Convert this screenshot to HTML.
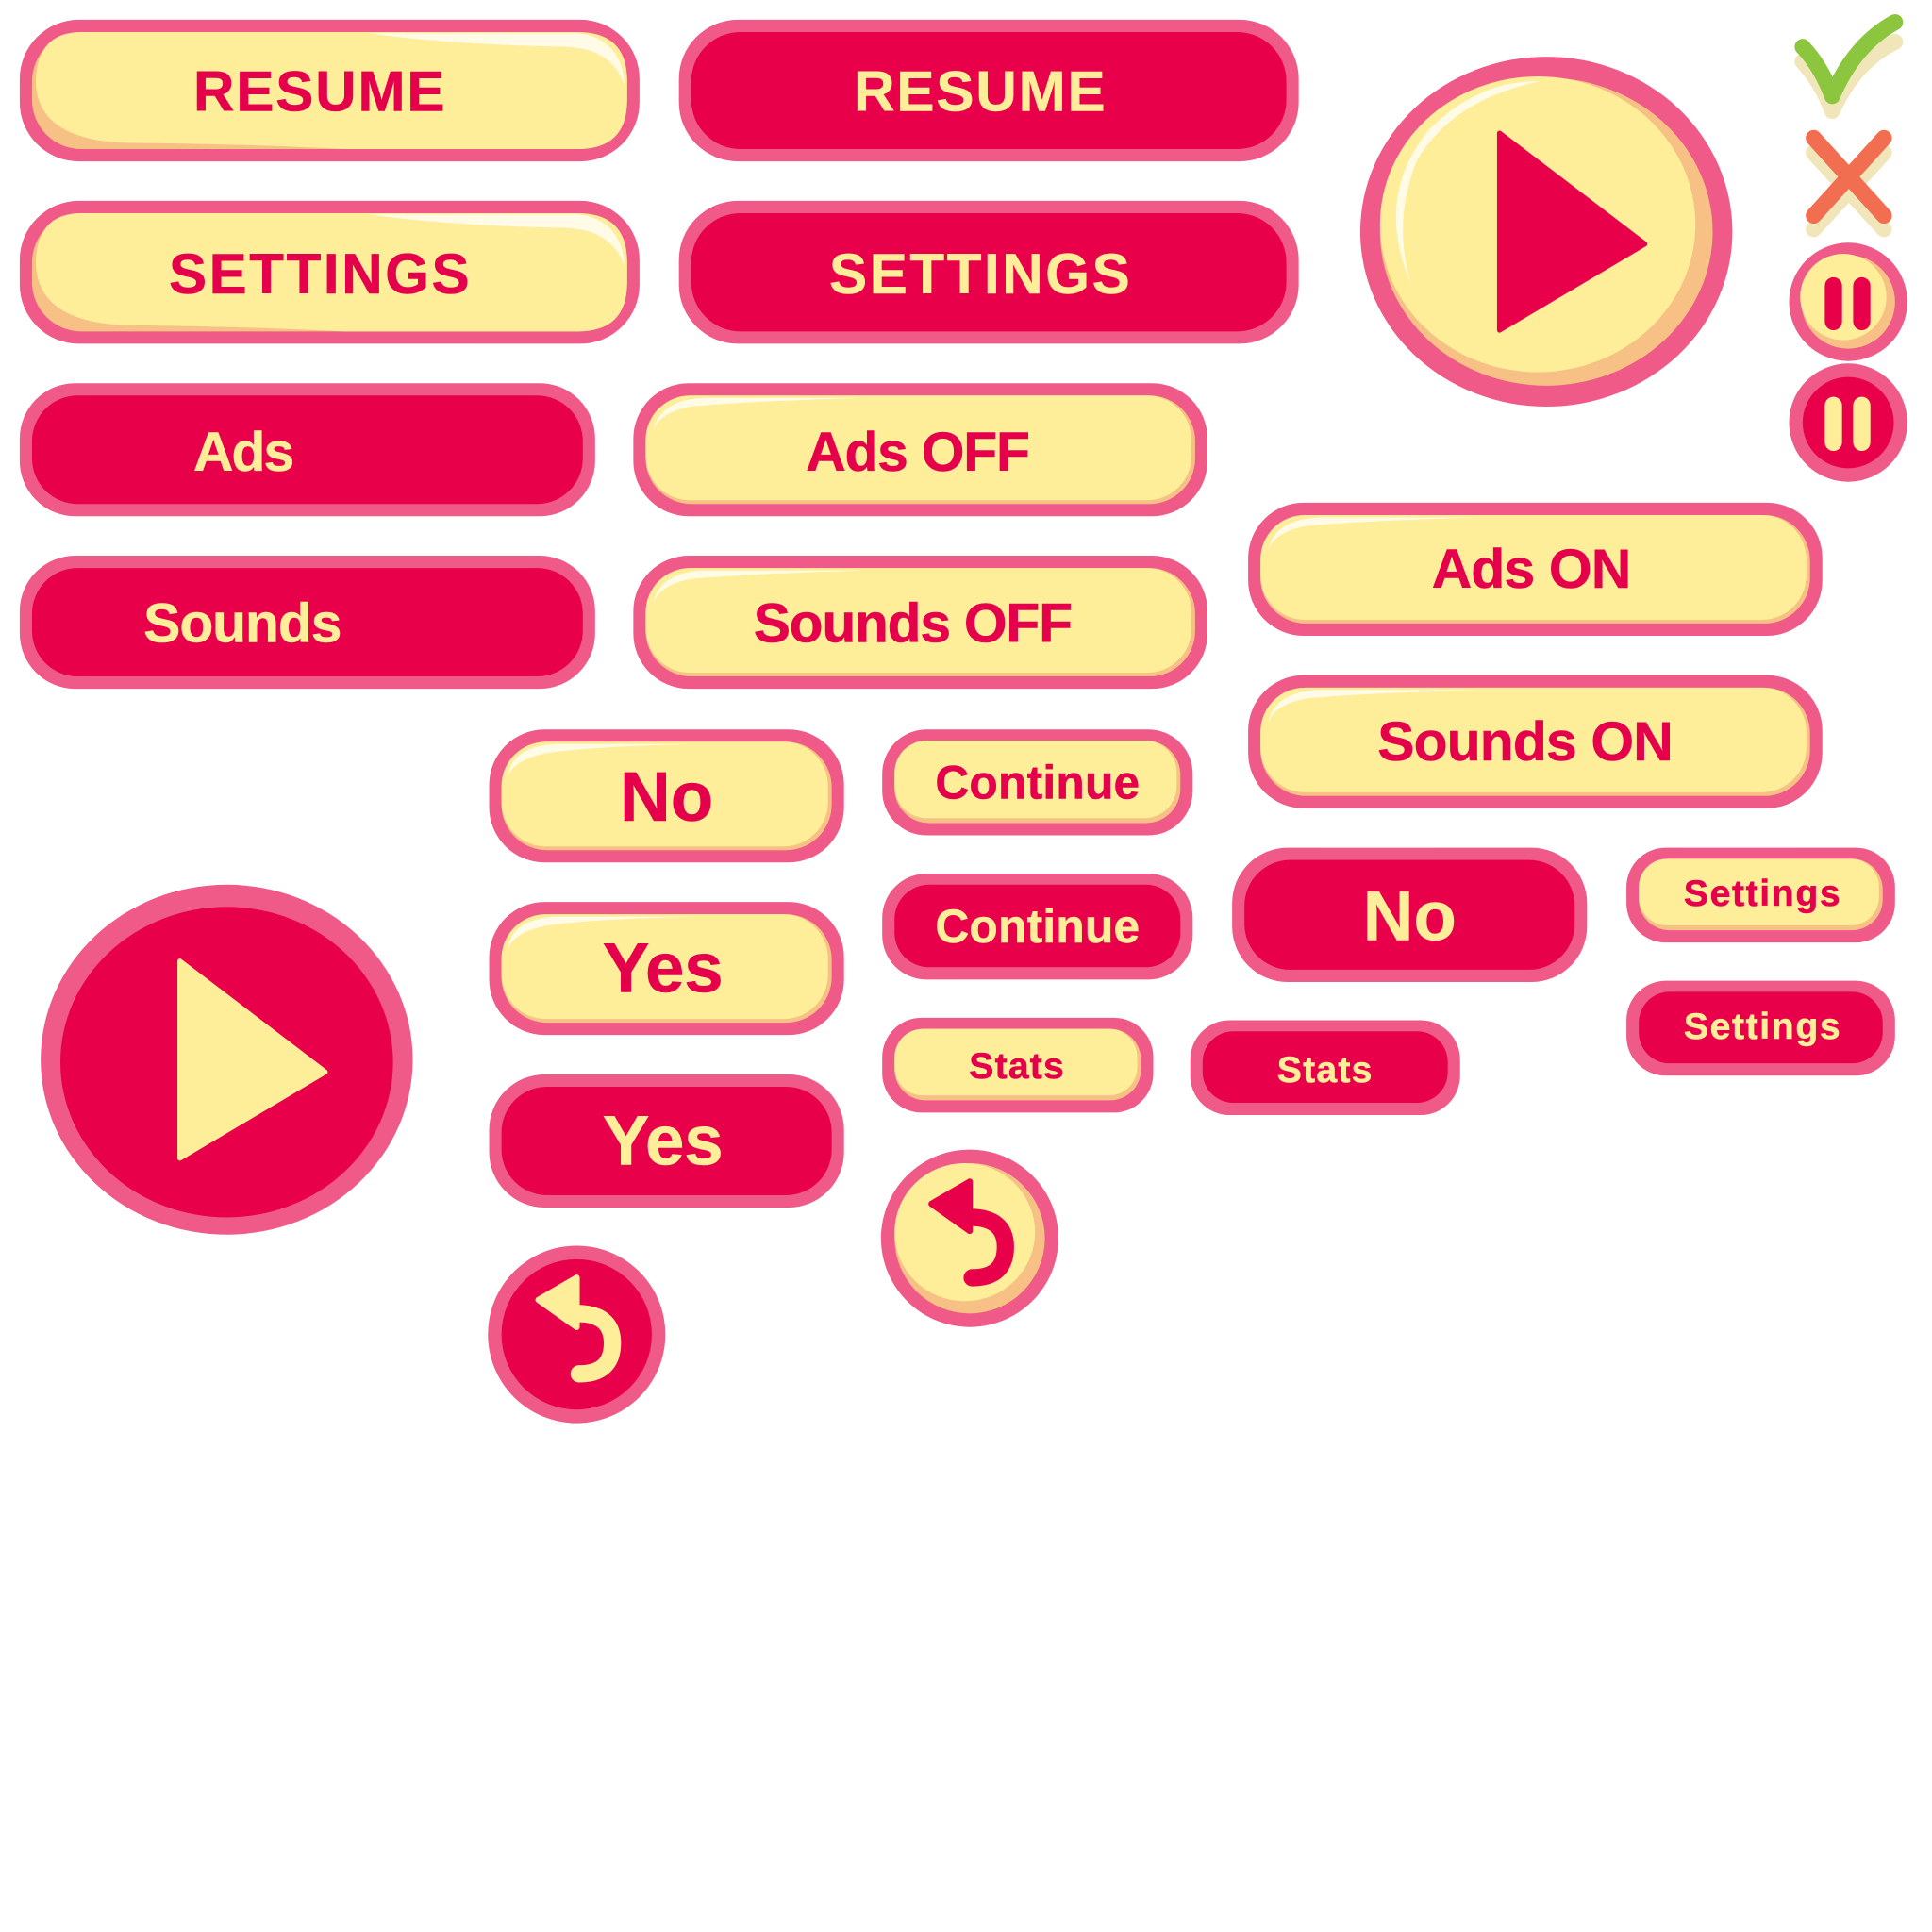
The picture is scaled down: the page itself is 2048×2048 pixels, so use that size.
<!DOCTYPE html>
<html><head><meta charset="utf-8"><style>
html,body{margin:0;padding:0;background:#fff;}
svg{display:block;}
text{font-family:"Liberation Sans",Arial,sans-serif;font-weight:bold;text-anchor:middle;}
.ty{fill:#e5004b;stroke:#e5004b;stroke-width:0.4;}
.tr{fill:#feee9a;stroke:#feee9a;stroke-width:0.4;}
</style></head><body>
<svg width="2048" height="2048" viewBox="0 0 1568 1568" xmlns="http://www.w3.org/2000/svg">

<!-- RESUME yellow -->
<rect x="16" y="16" width="503" height="115" rx="48" fill="#f05a88"/>
<rect x="26" y="26" width="483" height="95" rx="40" fill="#f7c185"/>
<path d="M66 26 L469 26 Q509 26 509 66 L509 81 Q509 121 469 121 L280 121 Q200 117 110 116 Q30 116 29 66 Q30 26 66 26Z" fill="#feee9a"/>
<path d="M300 27 L470 27 Q505 32 507 70 Q498 40 460 38 Q360 36 300 27Z" fill="#fffbe6"/>
<text class="ty" x="259" y="90" font-size="46" textLength="204">RESUME</text>
<!-- RESUME red -->
<rect x="551" y="16" width="503" height="115" rx="48" fill="#f05a88"/>
<rect x="561" y="26" width="483" height="95" rx="40" fill="#e8004a"/>
<text class="tr" x="795" y="90" font-size="46" textLength="204">RESUME</text>

<!-- SETTINGS yellow -->
<rect x="16" y="163" width="503" height="116" rx="48" fill="#f05a88"/>
<rect x="26" y="173" width="483" height="96" rx="40" fill="#f7c185"/>
<path d="M66 173 L469 173 Q509 173 509 213 L509 229 Q509 269 469 269 L280 269 Q200 265 110 264 Q30 264 29 213 Q30 173 66 173Z" fill="#feee9a"/>
<path d="M300 174 L470 174 Q505 179 507 217 Q498 187 460 185 Q360 183 300 174Z" fill="#fffbe6"/>
<text class="ty" x="259" y="238" font-size="46" textLength="244">SETTINGS</text>
<!-- SETTINGS red -->
<rect x="551" y="163" width="503" height="116" rx="48" fill="#f05a88"/>
<rect x="561" y="173" width="483" height="96" rx="40" fill="#e8004a"/>
<text class="tr" x="795" y="238" font-size="46" textLength="244">SETTINGS</text>

<!-- Ads red -->
<rect x="16" y="311" width="467" height="108" rx="45" fill="#f05a88"/>
<rect x="26" y="321" width="447" height="88" rx="37" fill="#e8004a"/>
<text class="tr" x="198" y="382" font-size="45" textLength="82">Ads</text>
<!-- Ads OFF yellow -->
<rect x="514" y="311" width="466" height="108" rx="45" fill="#f05a88"/>
<rect x="524" y="321" width="446" height="88" rx="37" fill="#f7c185"/>
<rect x="524" y="321" width="443" height="85" rx="36" fill="#feee9a"/>
<path d="M530 350 Q535 325 570 323 L700 323 Q600 326 560 330 Q535 335 530 350Z" fill="#fffbe6"/>
<text class="ty" x="745" y="382" font-size="45" textLength="182">Ads OFF</text>

<!-- Sounds red -->
<rect x="16" y="451" width="467" height="108" rx="45" fill="#f05a88"/>
<rect x="26" y="461" width="447" height="88" rx="37" fill="#e8004a"/>
<text class="tr" x="197" y="521" font-size="45" textLength="161">Sounds</text>
<!-- Sounds OFF yellow -->
<rect x="514" y="451" width="466" height="108" rx="45" fill="#f05a88"/>
<rect x="524" y="461" width="446" height="88" rx="37" fill="#f7c185"/>
<rect x="524" y="461" width="443" height="85" rx="36" fill="#feee9a"/>
<path d="M530 490 Q535 465 570 463 L700 463 Q600 466 560 470 Q535 475 530 490Z" fill="#fffbe6"/>
<text class="ty" x="741" y="521" font-size="45" textLength="259">Sounds OFF</text>

<!-- Ads ON yellow -->
<rect x="1013" y="408" width="466" height="108" rx="45" fill="#f05a88"/>
<rect x="1023" y="418" width="446" height="88" rx="37" fill="#f7c185"/>
<rect x="1023" y="418" width="443" height="85" rx="36" fill="#feee9a"/>
<path d="M1029 447 Q1034 422 1069 420 L1199 420 Q1099 423 1059 427 Q1034 432 1029 447Z" fill="#fffbe6"/>
<text class="ty" x="1243" y="477" font-size="45" textLength="162">Ads ON</text>
<!-- Sounds ON yellow -->
<rect x="1013" y="548" width="466" height="108" rx="45" fill="#f05a88"/>
<rect x="1023" y="558" width="446" height="88" rx="37" fill="#f7c185"/>
<rect x="1023" y="558" width="443" height="85" rx="36" fill="#feee9a"/>
<path d="M1029 587 Q1034 562 1069 560 L1199 560 Q1099 563 1059 567 Q1034 572 1029 587Z" fill="#fffbe6"/>
<text class="ty" x="1238" y="617" font-size="45" textLength="240">Sounds ON</text>

<!-- Big play yellow -->
<ellipse cx="1255" cy="188" rx="151" ry="142" fill="#f05a88"/>
<ellipse cx="1255" cy="188" rx="135" ry="125" fill="#f7c185"/>
<ellipse cx="1248" cy="182" rx="128" ry="120" fill="#feee9a"/>
<path d="M1145 230 Q1115 160 1160 105 Q1200 65 1250 66 Q1180 80 1150 130 Q1130 180 1145 230Z" fill="#fffbe6"/>
<path d="M1217 108 L1335 198 L1217 268 Z" fill="#e8004a" stroke="#e8004a" stroke-width="4" stroke-linejoin="round"/>

<!-- Check -->
<path d="M1463 50 Q1478 66 1487 90 Q1505 50 1538 34" fill="none" stroke="#f1e6b9" stroke-width="13" stroke-linecap="round" stroke-linejoin="round"/>
<path d="M1463 38 Q1478 54 1487 78 Q1505 36 1538 18" fill="none" stroke="#8cc63f" stroke-width="13" stroke-linecap="round" stroke-linejoin="round"/>
<!-- X -->
<g stroke="#f1e6b9" stroke-width="13" stroke-linecap="round"><line x1="1472" y1="124" x2="1529" y2="186"/><line x1="1529" y1="124" x2="1472" y2="186"/></g>
<g stroke="#f26e50" stroke-width="13" stroke-linecap="round"><line x1="1472" y1="112" x2="1529" y2="175"/><line x1="1529" y1="112" x2="1472" y2="175"/></g>

<!-- Pause yellow -->
<circle cx="1500" cy="245" r="48" fill="#f05a88"/>
<circle cx="1500" cy="245" r="38" fill="#f7c185"/>
<circle cx="1496" cy="241" r="35" fill="#feee9a"/>
<g stroke="#e8004a" stroke-width="14" stroke-linecap="round"><line x1="1488" y1="232" x2="1488" y2="261"/><line x1="1511" y1="232" x2="1511" y2="261"/></g>
<!-- Pause red -->
<circle cx="1500" cy="343" r="48" fill="#f05a88"/>
<circle cx="1500" cy="343" r="37" fill="#e8004a"/>
<g stroke="#feee9a" stroke-width="14" stroke-linecap="round"><line x1="1488" y1="329" x2="1488" y2="359"/><line x1="1511" y1="329" x2="1511" y2="359"/></g>

<!-- No yellow -->
<rect x="397" y="592" width="288" height="108" rx="45" fill="#f05a88"/>
<rect x="407" y="602" width="268" height="88" rx="37" fill="#f7c185"/>
<rect x="407" y="602" width="265" height="85" rx="36" fill="#feee9a"/>
<path d="M412 630 Q416 606 450 604 L560 604 Q480 606 445 611 Q418 616 412 630Z" fill="#fffbe6"/>
<text class="ty" x="541" y="666" font-size="57" textLength="76">No</text>
<!-- Yes yellow -->
<rect x="397" y="732" width="288" height="108" rx="45" fill="#f05a88"/>
<rect x="407" y="742" width="268" height="88" rx="37" fill="#f7c185"/>
<rect x="407" y="742" width="265" height="85" rx="36" fill="#feee9a"/>
<path d="M412 770 Q416 746 450 744 L560 744 Q480 746 445 751 Q418 756 412 770Z" fill="#fffbe6"/>
<text class="ty" x="538" y="805" font-size="57" textLength="98">Yes</text>
<!-- Yes red -->
<rect x="397" y="872" width="288" height="108" rx="45" fill="#f05a88"/>
<rect x="407" y="882" width="268" height="88" rx="37" fill="#e8004a"/>
<text class="tr" x="538" y="945" font-size="57" textLength="98">Yes</text>

<!-- Continue yellow -->
<rect x="716" y="592" width="252" height="86" rx="36" fill="#f05a88"/>
<rect x="726" y="601" width="232" height="67" rx="28" fill="#f7c185"/>
<rect x="726" y="601" width="229" height="63" rx="26" fill="#feee9a"/>
<text class="ty" x="842" y="648" font-size="38" textLength="166">Continue</text>
<!-- Continue red -->
<rect x="716" y="709" width="252" height="86" rx="36" fill="#f05a88"/>
<rect x="726" y="718" width="232" height="67" rx="28" fill="#e8004a"/>
<text class="tr" x="842" y="765" font-size="38" textLength="166">Continue</text>

<!-- Stats yellow -->
<rect x="716" y="826" width="220" height="77" rx="32" fill="#f05a88"/>
<rect x="726" y="835" width="200" height="58" rx="25" fill="#f7c185"/>
<rect x="726" y="835" width="197" height="54" rx="23" fill="#feee9a"/>
<text class="ty" x="825" y="875" font-size="30" textLength="77">Stats</text>
<!-- Stats red -->
<rect x="966" y="828" width="219" height="77" rx="32" fill="#f05a88"/>
<rect x="976" y="837" width="199" height="58" rx="25" fill="#e8004a"/>
<text class="tr" x="1075" y="878" font-size="30" textLength="77">Stats</text>

<!-- No red -->
<rect x="1000" y="688" width="288" height="109" rx="45" fill="#f05a88"/>
<rect x="1010" y="698" width="268" height="89" rx="37" fill="#e8004a"/>
<text class="tr" x="1144" y="763" font-size="57" textLength="76">No</text>

<!-- Settings small yellow -->
<rect x="1320" y="688" width="218" height="77" rx="32" fill="#f05a88"/>
<rect x="1330" y="697" width="198" height="58" rx="25" fill="#f7c185"/>
<rect x="1330" y="697" width="195" height="54" rx="23" fill="#feee9a"/>
<text class="ty" x="1430" y="735" font-size="30" textLength="127">Settings</text>
<!-- Settings small red -->
<rect x="1320" y="796" width="218" height="77" rx="32" fill="#f05a88"/>
<rect x="1330" y="805" width="198" height="58" rx="25" fill="#e8004a"/>
<text class="tr" x="1430" y="843" font-size="30" textLength="127">Settings</text>

<!-- Big play red -->
<ellipse cx="184" cy="860" rx="151" ry="142" fill="#f05a88"/>
<ellipse cx="184" cy="862" rx="135" ry="126" fill="#e8004a"/>
<path d="M146 780 L264 870 L146 940 Z" fill="#feee9a" stroke="#feee9a" stroke-width="4" stroke-linejoin="round"/>

<!-- Replay red -->
<ellipse cx="468" cy="1083" rx="72" ry="72" fill="#f05a88"/>
<ellipse cx="468" cy="1083" rx="61" ry="61" fill="#e8004a"/>
<path d="M437 1055 L468 1037 L468 1077 Z" fill="#feee9a" stroke="#feee9a" stroke-width="5" stroke-linejoin="round"/>
<path d="M468 1066 Q497 1066 497 1090 Q497 1115 470 1115" fill="none" stroke="#feee9a" stroke-width="14" stroke-linecap="round"/>

<!-- Replay yellow -->
<ellipse cx="787" cy="1005" rx="72" ry="72" fill="#f05a88"/>
<ellipse cx="787" cy="1005" rx="61" ry="61" fill="#f7c185"/>
<ellipse cx="783" cy="1000" rx="57" ry="56" fill="#feee9a"/>
<path d="M756 977 L787 959 L787 999 Z" fill="#e8004a" stroke="#e8004a" stroke-width="5" stroke-linejoin="round"/>
<path d="M787 988 Q816 988 816 1012 Q816 1037 789 1037" fill="none" stroke="#e8004a" stroke-width="14" stroke-linecap="round"/>
</svg>
</body></html>
